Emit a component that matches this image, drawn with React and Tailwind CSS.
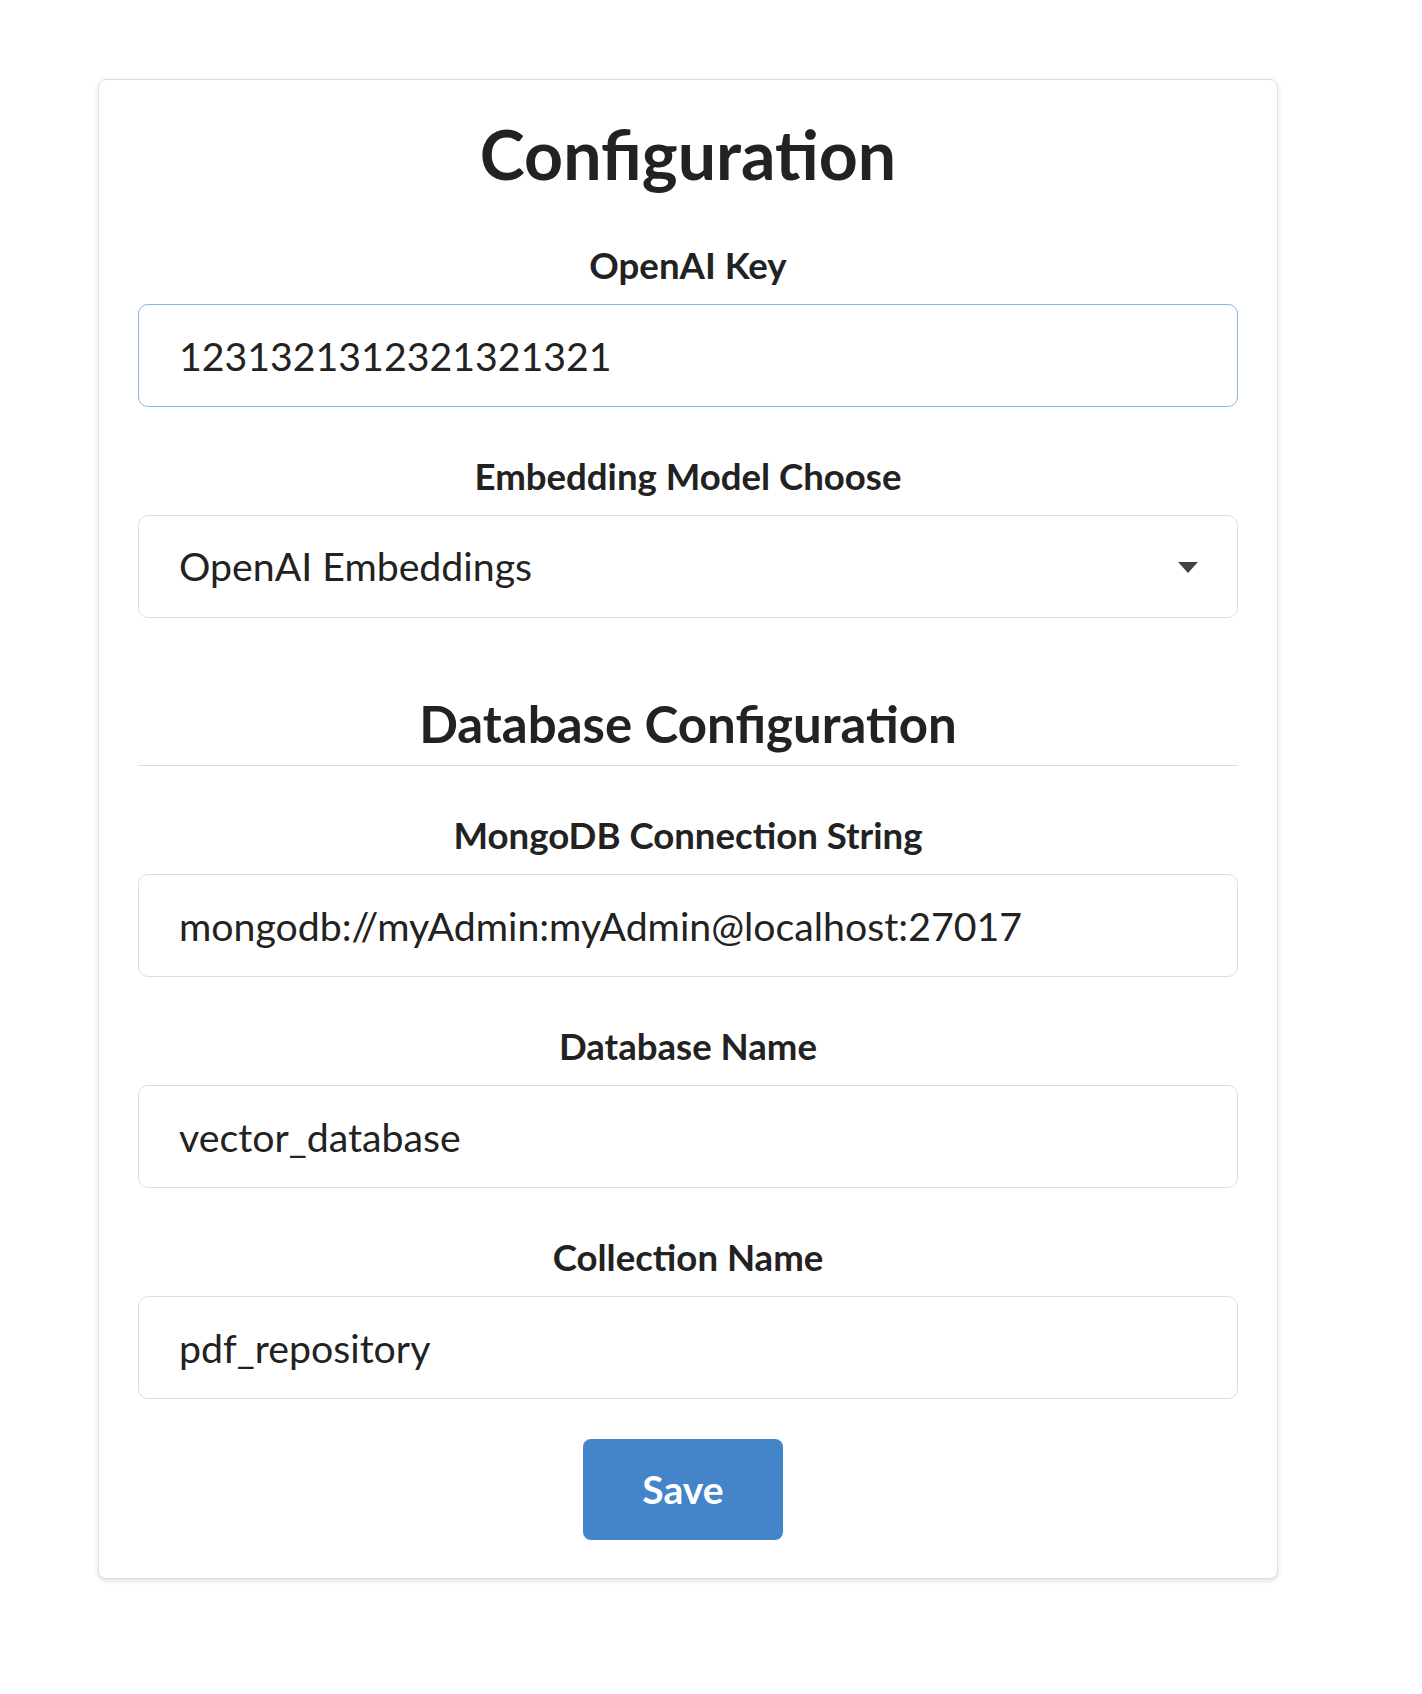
import React, { useState } from 'react';

const fields = [
  { name: 'mongoUri', label: 'MongoDB Connection String', value: 'mongodb://myAdmin:myAdmin@localhost:27017' },
  { name: 'dbName', label: 'Database Name', value: 'vector_database' },
  { name: 'collection', label: 'Collection Name', value: 'pdf_repository' },
];

const inputCls = 'block w-full h-[103px] px-[40px] rounded-[10px] border border-[#dddddd] bg-white text-[39.25px] text-[#222222] outline-none';

const Field = ({ label, children }) => (
  <div className="mt-[47px] first:mt-0">
    <label className="block h-[44px] leading-[44px] text-center text-[36.6px] font-bold text-[#222222]">{label}</label>
    <div className="mt-[17px]">{children}</div>
  </div>
);

const App = () => {
  const [form, setForm] = useState({
    openaiKey: '1231321312321321321',
    model: 'openai',
    mongoUri: fields[0].value,
    dbName: fields[1].value,
    collection: fields[2].value,
  });

  const handleChange = (e) => {
    const { name, value } = e.target;
    setForm(prev => ({ ...prev, [name]: value }));
  };

  return (
    <div className="min-h-[1694px] bg-white pt-[79px] pl-[98px]" style={{ fontFamily: 'Lato, "Open Sans", sans-serif' }}>
      <div className="w-[1180px] rounded-[8px] border border-[#dedede] bg-white px-[39px] pt-[33px] pb-[38px] shadow-[0_2px_5px_rgba(0,0,0,0.12)]">
        <h1 className="h-[82px] leading-[82px] text-center text-[68px] font-bold text-[#222222]">Configuration</h1>

        <div className="mt-[48px]">
          <Field label="OpenAI Key">
            <input name="openaiKey" value={form.openaiKey} onChange={handleChange} className={`${inputCls} !border-[#8db4d8]`} />
          </Field>
          <Field label="Embedding Model Choose">
            <div className="relative">
              <select name="model" value={form.model} onChange={handleChange} className={`${inputCls} appearance-none`}>
                <option value="openai">OpenAI Embeddings</option>
              </select>
              <svg className="pointer-events-none absolute right-[40px] top-[47px]" width="20" height="11" viewBox="0 0 20 11">
                <path d="M0 0 L20 0 L10 11 Z" fill="#444444" />
              </svg>
            </div>
          </Field>
        </div>

        <div className="mt-[74px] border-b border-[#dddddd] pb-[9px]">
          <h2 className="h-[64px] leading-[64px] text-center text-[51px] font-bold text-[#222222]">Database Configuration</h2>
        </div>

        <div className="mt-[47px]">
          {fields.map(f => (
            <Field key={f.name} label={f.label}>
              <input name={f.name} value={form[f.name]} onChange={handleChange} className={inputCls} />
            </Field>
          ))}
        </div>

        <div className="mt-[40px] flex justify-center pr-[10px]">
          <button className="h-[101px] w-[200px] rounded-[8px] bg-[#4485c9] text-[39px] font-bold text-white">Save</button>
        </div>
      </div>
    </div>
  );
};

export default App;
